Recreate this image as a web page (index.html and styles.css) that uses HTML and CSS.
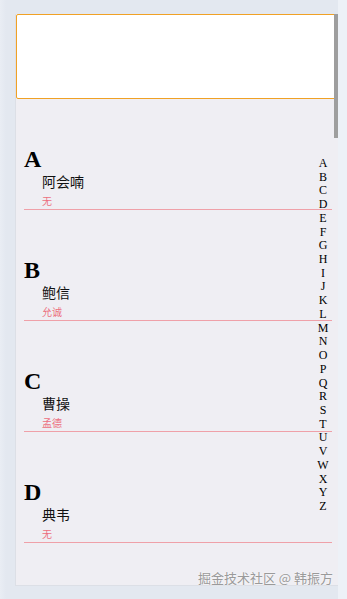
FILE: index.html
```html
<!DOCTYPE html>
<html lang="zh">
<head>
    <meta charset="UTF-8">
    <meta name="viewport" content="width=device-width, initial-scale=1.0">
    <title>通讯录</title>
    <link rel="stylesheet" href="styles.css">
</head>
<body>

<div class="phone">
    <div class="search"></div>
    <div class="thumb"></div>

    <div class="group">
        <h2 class="letter">A</h2>
        <p class="name">阿会喃</p>
        <p class="alias">无</p>
    </div>
    <div class="group">
        <h2 class="letter">B</h2>
        <p class="name">鲍信</p>
        <p class="alias">允诚</p>
    </div>
    <div class="group">
        <h2 class="letter">C</h2>
        <p class="name">曹操</p>
        <p class="alias">孟德</p>
    </div>
    <div class="group">
        <h2 class="letter">D</h2>
        <p class="name">典韦</p>
        <p class="alias">无</p>
    </div>

    <ul class="index">
        <li>A</li><li>B</li><li>C</li><li>D</li><li>E</li><li>F</li><li>G</li>
        <li>H</li><li>I</li><li>J</li><li>K</li><li>L</li><li>M</li><li>N</li>
        <li>O</li><li>P</li><li>Q</li><li>R</li><li>S</li><li>T</li><li>U</li>
        <li>V</li><li>W</li><li>X</li><li>Y</li><li>Z</li>
    </ul>
</div>

<div class="mark">掘金技术社区 @ 韩振方</div>

</body>
</html>
```

FILE: styles.css
```css
* {
    margin: 0;
    padding: 0;
    box-sizing: border-box;
}
body {
    width: 347px;
    height: 599px;
    overflow: hidden;
    position: relative;
    background: linear-gradient(to right, #e9edf4 0, #e3e8f0 6px, #e3e8f0 338px, #edf1f7 338px);
    font-family: "Liberation Serif", "Noto Sans CJK SC", serif;
}
.phone {
    position: relative;
    margin: 14px 0 0 15px;
    width: 323px;
    height: 572px;
    background: #efeef3;
    border-left: 1px solid #dcdfe6;
    border-bottom: 1px solid #dcdfe6;
    overflow: hidden;
}
.search {
    width: 320px;
    height: 85px;
    background: #fff;
    border: 1px solid #f0a125;
    border-radius: 2px;
}
.thumb {
    position: absolute;
    top: 0;
    right: 0;
    width: 4px;
    height: 124px;
    background: #9e9e9e;
}
.group {
    padding-top: 46px;
    margin: 0 6px 0 8px;
}
.letter {
    font-size: 24px;
    line-height: 28px;
    font-weight: bold;
    color: #000;
}
.name {
    padding-left: 18px;
    font-size: 14px;
    line-height: 20px;
    color: #111;
}
.alias {
    padding-left: 18px;
    margin-top: 1px;
    font-size: 10px;
    line-height: 15px;
    color: #ec6f7e;
    border-bottom: 1px solid #efa0a8;
}
.index {
    position: absolute;
    top: 143px;
    left: 300px;
    width: 14px;
    list-style: none;
    text-align: center;
    font-size: 12px;
    line-height: 13.72px;
    color: #000;
}
.mark {
    position: absolute;
    top: 569px;
    right: 14px;
    font-family: "Noto Sans CJK SC", sans-serif;
    font-size: 13px;
    line-height: 18px;
    color: #9a9a9a;
    text-shadow: 0 0 2px #fff;
}
```
